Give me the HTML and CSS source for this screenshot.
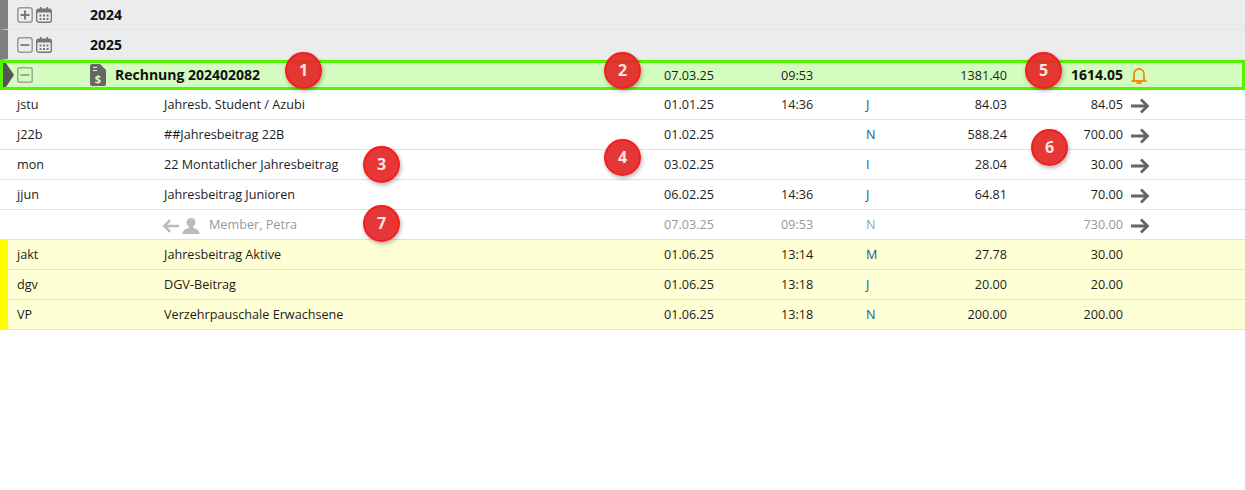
FILE: index.html
```html
<!DOCTYPE html>
<html lang="de">
<head>
<meta charset="utf-8">
<title>Rechnungen</title>
<link rel="stylesheet" href="styles.css">
</head>
<body>
<svg class="defs" width="0" height="0" aria-hidden="true">
  <symbol id="arrow" viewBox="0 0 20 16"><path d="M1 8H17.500M11 1.500 17.500 8 11 14.500" fill="none" stroke="currentColor" stroke-width="2.800"/></symbol>
  <symbol id="cal" viewBox="0 0 16 16"><path fill="#777" d="M4 0h1.500v2H4zM10.500 0H12v2h-1.500z"/><rect x=".7" y="2.200" width="14.600" height="13" rx="2" fill="#eee" stroke="#777" stroke-width="1.400"/><rect x="1" y="2.500" width="14" height="3" fill="#777"/><path fill="#777" d="M3.500 7.500h2v2h-2zM7 7.500h2v2H7zM10.500 7.500h2v2h-2zM3.500 11h2v2h-2zM7 11h2v2H7zM10.500 11h2v2h-2z"/></symbol>
</svg>
<main class="tree">
  <div class="row group">
    <svg class="toggle" viewBox="0 0 16 16"><rect x=".8" y=".8" width="14.400" height="14.400" rx="2.500" fill="none" stroke="#999" stroke-width="1.500"/><path d="M3.500 8h9M8 3.500v9" stroke="#777" stroke-width="2"/></svg>
    <svg class="cal"><use href="#cal"/></svg>
    <b class="year">2024</b>
  </div>
  <div class="row group">
    <svg class="toggle" viewBox="0 0 16 16"><rect x=".8" y=".8" width="14.400" height="14.400" rx="2.500" fill="none" stroke="#999" stroke-width="1.500"/><path d="M3.500 8h9" stroke="#888" stroke-width="2"/></svg>
    <svg class="cal"><use href="#cal"/></svg>
    <b class="year">2025</b>
  </div>
  <div class="row invoice">
    <svg class="pointer" viewBox="0 0 11 24"><path d="M0 0h3l8 12-8 12H0z" fill="#555"/></svg>
    <div class="head">
      <svg class="toggle" viewBox="0 0 16 16"><rect x=".8" y=".8" width="14.400" height="14.400" rx="2" fill="none" stroke="#9aa890" stroke-width="1.500"/><path d="M3.500 8h9" stroke="#9aa890" stroke-width="2"/></svg>
      <svg class="doc" viewBox="0 0 16 22"><path fill="#666" d="M2 0h8l6 6v14a2 2 0 0 1-2 2H2a2 2 0 0 1-2-2V2a2 2 0 0 1 2-2z"/><path stroke="#d4fcc0" stroke-width="1.200" d="M3 3.500h4M3 6.500h4"/><text class="dollar" x="8" y="19" text-anchor="middle">$</text></svg>
      <b class="title">Rechnung 202402082</b>
    </div>
    <span class="date">07.03.25</span><span class="time">09:53</span><span class="flag"></span><span class="amt">1381.40</span><b class="total">1614.05</b>
    <svg class="bell" viewBox="0 0 16 17"><path d="M3 12.500V7a5 5 0 0 1 10 0v5.500l1.500 1.500h-13zM5.500 16h5M8 2V.800" fill="none" stroke="#f39200" stroke-width="1.900"/></svg>
  </div>
  <div class="row line"><span>jstu</span><span>Jahresb. Student / Azubi</span><span class="date">01.01.25</span><span class="time">14:36</span><span class="flag">J</span><span class="amt">84.03</span><span class="total">84.05</span><svg class="arrow"><use href="#arrow"/></svg></div>
  <div class="row line"><span>j22b</span><span>##Jahresbeitrag 22B</span><span class="date">01.02.25</span><span class="time"></span><span class="flag">N</span><span class="amt">588.24</span><span class="total">700.00</span><svg class="arrow"><use href="#arrow"/></svg></div>
  <div class="row line"><span>mon</span><span>22 Montatlicher Jahresbeitrag</span><span class="date">03.02.25</span><span class="time"></span><span class="flag">I</span><span class="amt">28.04</span><span class="total">30.00</span><svg class="arrow"><use href="#arrow"/></svg></div>
  <div class="row line"><span>jjun</span><span>Jahresbeitrag Junioren</span><span class="date">06.02.25</span><span class="time">14:36</span><span class="flag">J</span><span class="amt">64.81</span><span class="total">70.00</span><svg class="arrow"><use href="#arrow"/></svg></div>
  <div class="row line muted"><span></span>
    <span class="member">
      <svg class="back" viewBox="0 0 20 16"><path d="M19 8H2.500M9 1.500 2.500 8 9 14.500" fill="none" stroke="#bbb" stroke-width="2.800"/></svg>
      <svg class="person" viewBox="0 0 18 16"><circle cx="9" cy="4.500" r="4.500" fill="#bbb"/><path fill="#bbb" d="M7 8h4v1.500l5 2.500 2 4H0l2-4 5-2.500z"/></svg>
      <span class="mname">Member, Petra</span>
    </span>
    <span class="date">07.03.25</span><span class="time">09:53</span><span class="flag">N</span><span class="amt"></span><span class="total">730.00</span><svg class="arrow"><use href="#arrow"/></svg></div>
  <div class="row line open"><span>jakt</span><span>Jahresbeitrag Aktive</span><span class="date">01.06.25</span><span class="time">13:14</span><span class="flag">M</span><span class="amt">27.78</span><span class="total">30.00</span></div>
  <div class="row line open"><span>dgv</span><span>DGV-Beitrag</span><span class="date">01.06.25</span><span class="time">13:18</span><span class="flag">J</span><span class="amt">20.00</span><span class="total">20.00</span></div>
  <div class="row line open"><span>VP</span><span>Verzehrpauschale Erwachsene</span><span class="date">01.06.25</span><span class="time">13:18</span><span class="flag">N</span><span class="amt">200.00</span><span class="total">200.00</span></div>
  <span class="badge b1">1</span><span class="badge b2">2</span><span class="badge b3">3</span><span class="badge b4">4</span><span class="badge b5">5</span><span class="badge b6">6</span><span class="badge b7">7</span>
</main>
</body>
</html>
```
FILE: styles.css
```css
html, body { margin: 0; padding: 0; background: #fff; }
body { font: 12.650px/1 "Open Sans", sans-serif; color: #1c1c1c; height: 490px; overflow: hidden; }
.defs { position: absolute; }
.tree { position: relative; }
.row {
  box-sizing: border-box; height: 30px; padding-left: 17px;
  border-bottom: 1px solid #e0e0e0; align-items: center;
}
.line, .invoice {
  display: grid;
  grid-template-columns: 147px 500px 117px 85px 60px 81px 116px 8px 24px;
}
.line .arrow { grid-column: 9; width: 20px; height: 16px; margin: 2px 0 0 -1px; color: #666; }
.date, .time, .flag { white-space: nowrap; }
.flag { color: #1d5a8a; }
.amt, .total { text-align: right; }
.group {
  display: flex; background: #ececec; border-left: 8px solid #808080;
  padding-left: 9px; border-bottom-color: #e3e3e3;
}
.toggle { width: 16px; height: 16px; flex: none; }
.cal { width: 16px; height: 16px; margin-left: 3px; }
.year { margin-left: 38px; font-size: 14px; color: #111; }
.invoice {
  position: relative; background: #d4fcc0; border: 3px solid #55f500;
  padding-left: 14px;
}
.pointer { position: absolute; left: 0; top: 0; width: 11px; height: 24px; }
.head { display: flex; align-items: center; grid-column: 1 / 3; }
.doc { width: 16px; height: 22px; margin-left: 57px; }
.dollar { font: 700 11px "Open Sans", sans-serif; fill: #d4fcc0; }
.title { margin-left: 9px; color: #111; font-size: 14px; }
.invoice .total { font-size: 14px; color: #111; }
.bell { grid-column: 9; width: 16px; height: 17px; }
.muted { color: #999; }
.muted .flag { color: #8fa3b5; }
.member { display: flex; align-items: center; margin-left: -2px; }
.back { width: 18px; height: 16px; margin-top: 2px; }
.person { width: 18px; height: 16px; margin: 2px 0 0 2px; }
.mname { margin-left: 9px; }
.open { background: #ffffd5; border-left: 8px solid #ff0; padding-left: 9px; }
.badge {
  position: absolute; box-sizing: border-box; width: 37px; height: 37px; border-radius: 50%;
  background: rgba(228, 38, 38, .92); border: 2px solid #f51c1c; color: #fbe4e4;
  font: 700 16px/32px "Open Sans", sans-serif; text-align: center;
  box-shadow: 1px 2px 4px rgba(0, 0, 0, .3);
}
.b1 { left: 285px; top: 52px; }
.b2 { left: 604px; top: 52px; }
.b3 { left: 363px; top: 146px; }
.b4 { left: 604px; top: 139px; }
.b5 { left: 1025px; top: 52px; }
.b6 { left: 1031px; top: 129px; }
.b7 { left: 363px; top: 205px; }
```
